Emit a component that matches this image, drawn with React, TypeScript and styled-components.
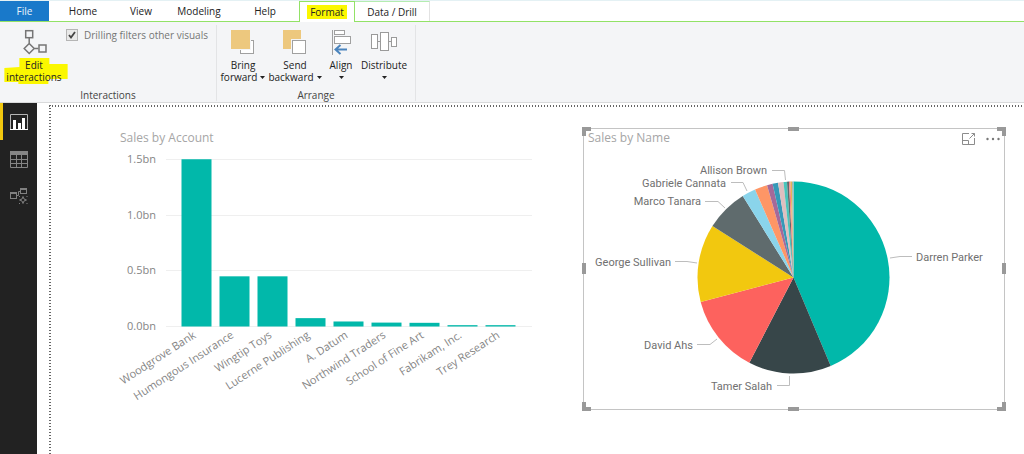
import React from "react";
import styled, { createGlobalStyle } from "styled-components";

const GlobalStyle = createGlobalStyle`
  *, *::before, *::after { box-sizing: border-box; }
  html, body, #root { height: 100%; }
  body {
    margin: 0;
    background: #fff;
    color: #222;
    font-family: "Open Sans", "Noto Sans", sans-serif;
    font-size: 10px;
    line-height: 12px;
  }
  button { font: inherit; color: inherit; background: none; border: 0; padding: 0; margin: 0; }
`;

const Shell = styled.div`
  display: flex;
  flex-direction: column;
  min-height: 100%;
`;

/* ---------- Ribbon ---------- */

const TabBar = styled.nav`
  display: flex;
  height: 22px;
  border-top: 1px solid #e4f1f4;
  border-bottom: 1px solid #92e266;
`;

const Tab = styled.button<{ $width: number }>`
  width: ${(p) => p.$width}px;
  height: 20px;
  text-align: center;
`;

const FileTab = styled(Tab)`
  background: #1979ca;
  color: #e9f3fb;
`;

const ActiveTab = styled(Tab)`
  height: 21px;
  margin-left: 2px;
  background: #fff;
  border: 1px solid #92e266;
  border-bottom: 0;
`;

const ContextTab = styled(Tab)`
  border-top: 1px solid #b4ecb0;
  border-right: 1px solid #e2e2e2;
`;

const Marked = styled.span`
  display: inline-block;
  padding: 1px 3px;
  background: #fbf700;
`;

const Ribbon = styled.header`
  display: flex;
  height: 81px;
  padding-top: 3px;
  background: #f4f5f7;
  border-bottom: 1px solid #d9dadb;
`;

const Group = styled.section<{ $width: number }>`
  display: flex;
  flex-direction: column;
  justify-content: space-between;
  width: ${(p) => p.$width}px;
  height: 76px;
  border-right: 1px solid #e3e4e6;
`;

const GroupBody = styled.div`
  display: flex;
  align-items: flex-start;
  padding: 4px 2px 0;
`;

const GroupLabel = styled.h2`
  margin: 0;
  font-size: 10px;
  font-weight: 400;
  line-height: 12px;
  text-align: center;
  color: #444;
`;

const RibbonButton = styled.button<{ $width: number }>`
  display: flex;
  flex-direction: column;
  align-items: center;
  width: ${(p) => p.$width}px;
  white-space: nowrap;

  & > svg { display: block; margin-bottom: 4px; }
`;

const Line = styled.span`
  display: flex;
  align-items: center;
  justify-content: center;
  gap: 3px;
  height: 12px;
`;

const MarkedLabel = styled.span`
  position: relative;
  display: block;
  z-index: 0;

  &::before {
    content: "";
    position: absolute;
    z-index: -1;
    left: -2px;
    right: -6px;
    top: -1px;
    bottom: -1px;
    background: #fbf700;
    clip-path: polygon(15px 0, 45px 0, 45px 6px, 100% 6px, 100% 21px, 44px 21px, 44px 100%, 14px 100%, 14px 24px, 0 24px, 0 10px, 15px 9px);
  }
`;

const CheckLabel = styled.label`
  display: flex;
  align-items: center;
  gap: 6px;
  height: 12px;
  color: #757575;
  white-space: nowrap;
`;

const Checkbox = styled.input`
  appearance: none;
  width: 12px;
  height: 12px;
  margin: 0;
  border: 1px solid #b5b5b5;
  background: #e9e9e9
    url("data:image/svg+xml,%3Csvg xmlns='http://www.w3.org/2000/svg' viewBox='0 0 10 10'%3E%3Cpath d='M2 5l2 2.5L8 2' fill='none' stroke='%23444' stroke-width='1.8'/%3E%3C/svg%3E")
    center / 10px 10px no-repeat;
`;

/* ---------- Workspace ---------- */

const Workspace = styled.div`
  display: flex;
  flex: 1;
`;

const SideRail = styled.nav`
  flex: none;
  width: 37px;
  background: #222;
`;

const RailButton = styled.button<{ $active?: boolean }>`
  display: flex;
  align-items: center;
  width: 37px;
  height: 37px;
  padding-left: ${(p) => (p.$active ? 7 : 10)}px;
  border-left: ${(p) => (p.$active ? "3px solid #f2c80f" : "0")};
`;

const Canvas = styled.main`
  flex: 1;
  min-width: 0;
  margin: 2px 0 0 12px;
  padding: 23px 19px 0 63px;
  display: grid;
  grid-template-columns: 440fr 422fr;
  gap: 31px;
  align-items: start;
  background:
    repeating-linear-gradient(90deg, #666 0 1px, transparent 1px 3px) 0 0 / 100% 2px no-repeat,
    repeating-linear-gradient(180deg, #666 0 1px, transparent 1px 3px) 0 0 / 2px 100% no-repeat;
`;

const Visual = styled.section<{ $selected?: boolean }>`
  position: relative;
  border: 1px solid ${(p) => (p.$selected ? "#c4c4c4" : "transparent")};

  & > svg { display: block; width: 100%; height: auto; }
`;

const VisualHeader = styled.header<{ $indent: number }>`
  display: flex;
  align-items: center;
  gap: 10px;
  height: 20px;
  padding: 0 4px 0 ${(p) => p.$indent}px;
`;

const VisualTitle = styled.h3`
  flex: 1;
  margin: 0;
  font-size: 12px;
  font-weight: 400;
  line-height: 16px;
  padding-bottom: 2px;
  color: #a6a6a6;
`;

const IconButton = styled.button`
  display: block;
  & > svg { display: block; }
`;

type Spot = "tl" | "t" | "tr" | "r" | "br" | "b" | "bl" | "l";

const spotStyles: Record<Spot, string> = {
  tl: "left: -2px; top: -2px; width: 9px; height: 9px; border-width: 4px 0 0 4px;",
  tr: "right: -2px; top: -2px; width: 9px; height: 9px; border-width: 4px 4px 0 0;",
  bl: "left: -2px; bottom: -2px; width: 9px; height: 9px; border-width: 0 0 4px 4px;",
  br: "right: -2px; bottom: -2px; width: 9px; height: 9px; border-width: 0 4px 4px 0;",
  t: "left: calc(50% - 6px); top: -2px; width: 11px; border-width: 4px 0 0;",
  b: "left: calc(50% - 6px); bottom: -2px; width: 11px; border-width: 0 0 4px;",
  l: "left: -2px; top: calc(50% - 6px); height: 11px; border-width: 0 0 0 4px;",
  r: "right: -2px; top: calc(50% - 6px); height: 11px; border-width: 0 4px 0 0;",
};

const Handle = styled.span<{ $spot: Spot }>`
  position: absolute;
  border: 0 solid #999;
  ${(p) => spotStyles[p.$spot]}
`;

const AxisText = styled.text`
  font-family: "Open Sans", "Noto Sans", sans-serif;
  font-size: 11px;
  fill: #858585;
  text-anchor: end;
`;

const SliceText = styled.text`
  font-family: Roboto, sans-serif;
  font-size: 11px;
  fill: #707070;
`;

/* ---------- Icons ---------- */

const InteractionsIcon = () => (
  <svg width="26" height="26" viewBox="0 0 26 26" fill="none" stroke="#757575" strokeWidth="1.5">
    <rect x="4.7" y="1.7" width="7" height="7" />
    <path d="M8.200 9v5.500M13 19.500h4.500M8.200 14.500l5 5-5 5-5-5z" />
    <rect x="18" y="16" width="7" height="7" />
  </svg>
);

const ForwardIcon = () => (
  <svg width="26" height="26" viewBox="0 0 26 26">
    <rect x="10.5" y="11.5" width="13" height="13" fill="#fff" stroke="#a0a0a0" />
    <rect x="0" y="0" width="21" height="21" fill="#f4f5f7" />
    <rect x="1" y="1" width="19" height="19" fill="#edc87e" />
  </svg>
);

const BackwardIcon = () => (
  <svg width="26" height="26" viewBox="0 0 26 26">
    <rect x="1" y="1" width="18" height="19" fill="#edc87e" />
    <rect x="9" y="10" width="16" height="16" fill="#f4f5f7" />
    <rect x="10.5" y="11.5" width="13" height="13" fill="#fff" stroke="#a0a0a0" />
  </svg>
);

const AlignIcon = () => (
  <svg width="26" height="26" viewBox="0 0 26 26" fill="none">
    <path d="M4.5 1v25" stroke="#a0a0a0" />
    <rect x="6.5" y="1.5" width="10" height="4" fill="#fff" stroke="#a0a0a0" />
    <rect x="6.5" y="7.5" width="16" height="7" fill="#fff" stroke="#a0a0a0" />
    <path d="M19 20.5H8M12.5 16l-5 4.5 5 4.5" stroke="#4a84bd" strokeWidth="2" />
  </svg>
);

const DistributeIcon = () => (
  <svg width="28" height="26" viewBox="0 0 28 26" fill="#fff" stroke="#9a9a9a">
    <path d="M7 12.5h15" />
    <rect x="1.5" y="5.5" width="6" height="14" />
    <rect x="10.5" y="3.5" width="8" height="18" />
    <rect x="21.5" y="8.5" width="5" height="9" />
  </svg>
);

const Caret = () => (
  <svg width="5" height="3" viewBox="0 0 5 3">
    <path d="M0 0h5L2.5 3z" fill="#222" />
  </svg>
);

const ReportIcon = () => (
  <svg width="18" height="18" viewBox="0 0 18 18">
    <path d="M0.500 16V1.500h17V16" fill="none" stroke="#b5b5b5" />
    <path d="M0 16.500h18" stroke="#fff" />
    <path d="M3 7h3v9H3zM8 10h3v6H8zM12 5h3v11h-3z" fill="#fff" />
  </svg>
);

const DataIcon = () => (
  <svg width="18" height="18" viewBox="0 0 18 18" fill="none" stroke="#858585">
    <path d="M0 1h18v4H0z" fill="#858585" stroke="none" />
    <path d="M0.500 1.500h17v16H0.500zM0 9.500h18M0 13.500h18M6.500 5v13M11.500 5v13" />
  </svg>
);

const ModelIcon = () => (
  <svg width="18" height="18" viewBox="0 0 18 18" fill="none" stroke="#808080">
    <rect x="0.500" y="5.500" width="6" height="6" />
    <path d="M0 6h7M10 2h7" strokeWidth="2" />
    <rect x="10.500" y="1.500" width="6" height="5" />
    <path d="M7 8.500h1.500V4.500H10" />
    <path d="M13 9.500l1 2.500 2.500 1-2.500 1-1 2.500-1-2.500-2.500-1 2.500-1z" />
    <path d="M9 9.500h1M16.500 9.500h1M9 16.500h1M16.500 16.500h1" />
  </svg>
);

const FocusIcon = () => (
  <svg width="14" height="12" viewBox="0 0 14 12" fill="none" stroke="#8c8c8c">
    <path d="M7 0.500H0.500v11h12V5M0.500 7.500h6v4M7.500 5.500l5-5M9.500 0.500h3v3" />
  </svg>
);

const MoreIcon = () => (
  <svg width="14" height="4" viewBox="0 0 14 4" fill="#777">
    <circle cx="1.500" cy="2" r="1.200" />
    <circle cx="7" cy="2" r="1.200" />
    <circle cx="12.500" cy="2" r="1.200" />
  </svg>
);

/* ---------- Charts ---------- */

const accounts = [
  { name: "Woodgrove Bank", value: 1.5 },
  { name: "Humongous Insurance", value: 0.45 },
  { name: "Wingtip Toys", value: 0.45 },
  { name: "Lucerne Publishing", value: 0.075 },
  { name: "A. Datum", value: 0.045 },
  { name: "Northwind Traders", value: 0.035 },
  { name: "School of Fine Art", value: 0.033 },
  { name: "Fabrikam, Inc.", value: 0.012 },
  { name: "Trey Research", value: 0.012 },
];

const ticks = [1.5, 1, 0.5, 0];
const BASE = 177;
const PER_BN = 111.5;

const BarChart = () => (
  <svg viewBox="0 0 438 260" role="img" aria-label="Sales by Account">
    {ticks.map((t) => (
      <g key={t}>
        <path d={`M53 ${Math.round(BASE - t * PER_BN) + 0.5}H419`} stroke="#efefef" />
        <AxisText x="43" y={BASE - t * PER_BN + 4}>{t.toFixed(1)}bn</AxisText>
      </g>
    ))}
    {accounts.map((a, i) => {
      const x = 68.5 + i * 38;
      const h = a.value * PER_BN;
      return (
        <g key={a.name}>
          <rect x={x} y={BASE + 0.5 - h} width="30" height={h} fill="#01b8aa" />
          <AxisText transform={`translate(${x + 15} ${BASE + 11}) rotate(-33)`}>{a.name}</AxisText>
        </g>
      );
    })}
  </svg>
);

const CX = 209.5;
const CY = 128.5;
const R = 96;

const slices = [
  { end: 157.2, color: "#01b8aa" },
  { end: 207.4, color: "#374649" },
  { end: 255.2, color: "#fd625e" },
  { end: 302.4, color: "#f2c80f" },
  { end: 328.1, color: "#5f6b6d" },
  { end: 336.4, color: "#8ad4eb" },
  { end: 344, color: "#fe9666" },
  { end: 347.4, color: "#a66999" },
  { end: 350.7, color: "#3599b8" },
  { end: 354, color: "#dfbfbf" },
  { end: 356.1, color: "#4ac5bb" },
  { end: 357.3, color: "#5f6b6d" },
  { end: 358.2, color: "#fb8281" },
  { end: 359.1, color: "#e3b457" },
  { end: 360, color: "#9cb8b8" },
];

const edge = (deg: number) => {
  const a = (deg * Math.PI) / 180;
  return `${(CX + R * Math.sin(a)).toFixed(2)} ${(CY - R * Math.cos(a)).toFixed(2)}`;
};

const people = [
  { name: "Allison Brown", x: 183, y: 25, anchor: "end", line: "M188 21.500H200.500L201.500 31" },
  { name: "Gabriele Cannata", x: 142, y: 38, anchor: "end", line: "M147 33.500H159L163 42" },
  { name: "Marco Tanara", x: 117, y: 56, anchor: "end", line: "M121 52.500H134L141 59" },
  { name: "George Sullivan", x: 87, y: 117, anchor: "end", line: "M91 112.500H103L113 114" },
  { name: "David Ahs", x: 109, y: 200, anchor: "end", line: "M113 195.500H126L133 190" },
  { name: "Tamer Salah", x: 188, y: 241, anchor: "end", line: "M193 236.500H205.500V227" },
  { name: "Darren Parker", x: 332, y: 112, anchor: "start", line: "M306 109L316 107.500H328" },
] as const;

const PieChart = () => (
  <svg viewBox="0 0 420 260" role="img" aria-label="Sales by Name">
    {slices.map((s, i) => {
      const start = i ? slices[i - 1].end : 0;
      return (
        <path
          key={i}
          d={`M${CX} ${CY}L${edge(start)}A${R} ${R} 0 0 1 ${edge(s.end)}Z`}
          fill={s.color}
        />
      );
    })}
    {people.map((p) => (
      <g key={p.name}>
        <path d={p.line} fill="none" stroke="#bdbdbd" />
        <SliceText x={p.x} y={p.y} textAnchor={p.anchor}>{p.name}</SliceText>
      </g>
    ))}
  </svg>
);

const spots: Spot[] = ["tl", "t", "tr", "r", "br", "b", "bl", "l"];

export default function App() {
  return (
    <>
      <GlobalStyle />
      <Shell>
        <TabBar aria-label="Ribbon tabs">
          <FileTab $width={49}>File</FileTab>
          <Tab $width={68}>Home</Tab>
          <Tab $width={48}>View</Tab>
          <Tab $width={68}>Modeling</Tab>
          <Tab $width={64}>Help</Tab>
          <ActiveTab $width={56}><Marked>Format</Marked></ActiveTab>
          <ContextTab $width={75}>Data / Drill</ContextTab>
        </TabBar>
        <Ribbon>
          <Group $width={217}>
            <GroupBody>
              <RibbonButton $width={64}>
                <InteractionsIcon />
                <MarkedLabel>
                  <Line>Edit</Line>
                  <Line>interactions</Line>
                </MarkedLabel>
              </RibbonButton>
              <CheckLabel>
                <Checkbox type="checkbox" defaultChecked />
                Drilling filters other visuals
              </CheckLabel>
            </GroupBody>
            <GroupLabel>Interactions</GroupLabel>
          </Group>
          <Group $width={199}>
            <GroupBody>
              <RibbonButton $width={48}>
                <ForwardIcon />
                <Line>Bring</Line>
                <Line>forward <Caret /></Line>
              </RibbonButton>
              <RibbonButton $width={56}>
                <BackwardIcon />
                <Line>Send</Line>
                <Line>backward <Caret /></Line>
              </RibbonButton>
              <RibbonButton $width={36}>
                <AlignIcon />
                <Line>Align</Line>
                <Line><Caret /></Line>
              </RibbonButton>
              <RibbonButton $width={50}>
                <DistributeIcon />
                <Line>Distribute</Line>
                <Line><Caret /></Line>
              </RibbonButton>
            </GroupBody>
            <GroupLabel>Arrange</GroupLabel>
          </Group>
        </Ribbon>
        <Workspace>
          <SideRail aria-label="Views">
            <RailButton $active aria-label="Report"><ReportIcon /></RailButton>
            <RailButton aria-label="Data"><DataIcon /></RailButton>
            <RailButton aria-label="Model"><ModelIcon /></RailButton>
          </SideRail>
          <Canvas>
            <Visual>
              <VisualHeader $indent={7}>
                <VisualTitle>Sales by Account</VisualTitle>
              </VisualHeader>
              <BarChart />
            </Visual>
            <Visual $selected>
              <VisualHeader $indent={4}>
                <VisualTitle>Sales by Name</VisualTitle>
                <IconButton aria-label="Focus mode"><FocusIcon /></IconButton>
                <IconButton aria-label="More options"><MoreIcon /></IconButton>
              </VisualHeader>
              <PieChart />
              {spots.map((s) => <Handle key={s} $spot={s} />)}
            </Visual>
          </Canvas>
        </Workspace>
      </Shell>
    </>
  );
}
